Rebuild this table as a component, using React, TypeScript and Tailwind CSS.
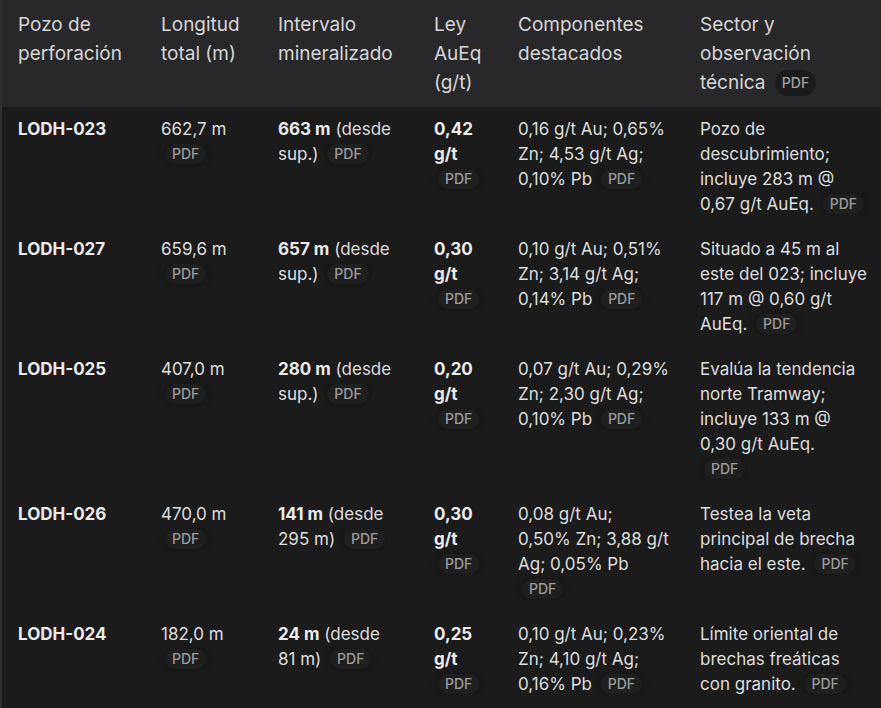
import type { ReactNode } from 'react';

type Fila = {
  pozo: string;
  longitud: string;
  intervalo: string;
  desde: string;
  ley: string;
  // '|' marca el salto de línea que el original hace en esa celda
  componentes: string;
  sector: string;
  sectorPdfAbajo?: boolean;
};

const FILAS: Fila[] = [
  {
    pozo: 'LODH-023',
    longitud: '662,7 m',
    intervalo: '663 m',
    desde: '(desde sup.)',
    ley: '0,42 g/t',
    componentes: '0,16 g/t Au; 0,65% Zn; 4,53 g/t Ag; 0,10% Pb',
    sector: 'Pozo de descubrimiento; incluye 283 m @ 0,67 g/t AuEq.',
  },
  {
    pozo: 'LODH-027',
    longitud: '659,6 m',
    intervalo: '657 m',
    desde: '(desde sup.)',
    ley: '0,30 g/t',
    componentes: '0,10 g/t Au; 0,51% Zn; 3,14 g/t Ag; 0,14% Pb',
    sector: 'Situado a 45 m al este del 023; incluye 117 m @ 0,60 g/t AuEq.',
  },
  {
    pozo: 'LODH-025',
    longitud: '407,0 m',
    intervalo: '280 m',
    desde: '(desde sup.)',
    ley: '0,20 g/t',
    componentes: '0,07 g/t Au; 0,29% Zn; 2,30 g/t Ag; 0,10% Pb',
    sector: 'Evalúa la tendencia norte Tramway; incluye 133 m @ 0,30 g/t AuEq.',
    sectorPdfAbajo: true,
  },
  {
    pozo: 'LODH-026',
    longitud: '470,0 m',
    intervalo: '141 m',
    desde: '(desde 295 m)',
    ley: '0,30 g/t',
    componentes: '0,08 g/t Au;|0,50% Zn; 3,88 g/t Ag; 0,05% Pb',
    sector: 'Testea la veta principal de brecha hacia el este.',
  },
  {
    pozo: 'LODH-024',
    longitud: '182,0 m',
    intervalo: '24 m',
    desde: '(desde 81 m)',
    ley: '0,25 g/t',
    componentes: '0,10 g/t Au; 0,23% Zn; 4,10 g/t Ag; 0,16% Pb',
    sector: 'Límite oriental de brechas freáticas con granito.',
  },
];

function Pdf({ cabecera = false, bloque = false }: { cabecera?: boolean; bloque?: boolean }) {
  return (
    <span
      className={`${bloque ? '' : 'ml-1'} inline-block rounded-full px-[7px] text-[14px] leading-[20px] font-medium align-[1px] ${
        cabecera
          ? 'bg-[#1b1b1c] py-[3px] text-[#a3a3a3]'
          : 'bg-[#1f1f1f] text-[#9b9b9b] shadow-[0_0_6px_2px_rgba(0,0,0,0.18)]'
      }`}
    >
      PDF
    </span>
  );
}

function Celda({ children, pr = 'pr-4' }: { children: ReactNode; pr?: string }) {
  return <td className={`pl-4 ${pr} py-2.5 align-top`}>{children}</td>;
}

function ConSaltos({ texto }: { texto: string }) {
  const partes = texto.split('|');
  return (
    <>
      {partes.map((p, i) => (
        <span key={i}>
          {i > 0 && <br />}
          {p}
        </span>
      ))}
    </>
  );
}

export default function App() {
  return (
    <div
      className="h-[708px] w-[881px] overflow-hidden border-l-2 border-[#2f2f30] bg-[#1b1b1b]"
      style={{ fontFamily: 'Inter, "Noto Sans", sans-serif' }}
    >
      <table className="w-[884px] table-fixed border-collapse text-left">
        <colgroup>
          <col className="w-[143px]" />
          <col className="w-[117px]" />
          <col className="w-[156px]" />
          <col className="w-[84px]" />
          <col className="w-[182px]" />
          <col className="w-[202px]" />
        </colgroup>
        <thead className="bg-[#28282a] text-[19px] leading-[29px] text-[#d6d6d6]">
          <tr>
            <th className="px-4 py-2.5 align-top font-normal">Pozo de perforación</th>
            <th className="px-4 py-2.5 align-top font-normal">Longitud total (m)</th>
            <th className="px-4 py-2.5 align-top font-normal">Intervalo mineralizado</th>
            <th className="px-4 py-2.5 align-top font-normal">Ley AuEq (g/t)</th>
            <th className="px-4 py-2.5 align-top font-normal">Componentes destacados</th>
            <th className="px-4 py-2.5 align-top font-normal">
              Sector y observación técnica <Pdf cabecera />
            </th>
          </tr>
        </thead>
        <tbody className="text-[17px] leading-[25px] text-[#dedede]">
          {FILAS.map((fila) => (
            <tr key={fila.pozo}>
              <td className="py-2.5 pr-4 pl-4 align-top">
                <span className="font-bold text-[#ebebeb]">{fila.pozo}</span>
              </td>
              <Celda>
                {fila.longitud} <Pdf />
              </Celda>
              <Celda pr="pr-5">
                <span className="font-bold text-[#ebebeb]">{fila.intervalo}</span> {fila.desde}{' '}
                <Pdf />
              </Celda>
              <Celda>
                <span className="font-bold text-[#ebebeb]">{fila.ley}</span> <Pdf />
              </Celda>
              <Celda pr="pr-3">
                <ConSaltos texto={fila.componentes} /> <Pdf />
              </Celda>
              <Celda>
                {fila.sector}{' '}
                {fila.sectorPdfAbajo ? (
                  <>
                    <br />
                    <span className="ml-1">
                      <Pdf bloque />
                    </span>
                  </>
                ) : (
                  <Pdf />
                )}
              </Celda>
            </tr>
          ))}
        </tbody>
      </table>
    </div>
  );
}
